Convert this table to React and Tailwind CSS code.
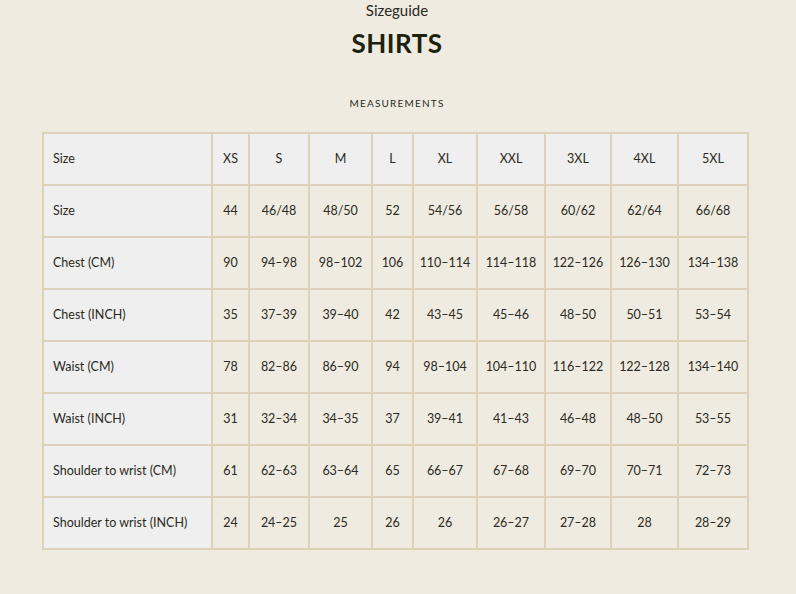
import React from "react";

const sizes = ["XS", "S", "M", "L", "XL", "XXL", "3XL", "4XL", "5XL"];
const widths = ["w-[169px]", "w-[37px]", "w-[60px]", "w-[63px]", "w-[41px]", "w-[64px]", "w-[68px]", "w-[66px]", "w-[67px]", "w-[70px]"];

const rows = [
  ["Size", "44", "46/48", "48/50", "52", "54/56", "56/58", "60/62", "62/64", "66/68"],
  ["Chest (CM)", "90", "94–98", "98–102", "106", "110–114", "114–118", "122–126", "126–130", "134–138"],
  ["Chest (INCH)", "35", "37–39", "39–40", "42", "43–45", "45–46", "48–50", "50–51", "53–54"],
  ["Waist (CM)", "78", "82–86", "86–90", "94", "98–104", "104–110", "116–122", "122–128", "134–140"],
  ["Waist (INCH)", "31", "32–34", "34–35", "37", "39–41", "41–43", "46–48", "48–50", "53–55"],
  ["Shoulder to wrist (CM)", "61", "62–63", "63–64", "65", "66–67", "67–68", "69–70", "70–71", "72–73"],
  ["Shoulder to wrist (INCH)", "24", "24–25", "25", "26", "26", "26–27", "27–28", "28", "28–29"],
];

export default function App() {
  return (
    <div className="min-h-[594px] bg-[#f0ebe1] text-[#2a2a22] font-['Lato','Noto_Sans',sans-serif]">
      <div className="flex flex-col items-center pr-[2px]">
        <p className="mt-[1px] text-[15px] leading-[18px] text-[#2a2a22]">Sizeguide</p>
        <h1 className="mt-[9px] text-[26px] leading-[30px] font-bold tracking-[0.5px] text-[#1d2210]">SHIRTS</h1>
        <p className="mt-[39px] text-[10px] leading-[12px] tracking-[1.2px] text-[#2a2a22]">MEASUREMENTS</p>
      </div>
      <div className="flex mt-[23px] pl-[42px]">
        <table className="table-fixed border-collapse w-[705px] text-[12.5px]">
          <colgroup>
            {widths.map((w, i) => (
              <col key={i} className={w} />
            ))}
          </colgroup>
          <thead>
            <tr className="h-[52px] bg-[#efefef]">
              <th className="border-2 border-[#ddd1b9] text-left font-normal pl-[9px]">Size</th>
              {sizes.map((s) => (
                <th key={s} className="border-2 border-[#ddd1b9] font-normal text-center">
                  {s}
                </th>
              ))}
            </tr>
          </thead>
          <tbody>
            {rows.map((r) => (
              <tr key={r[0]} className="h-[52px]">
                <td className="border-2 border-[#ddd1b9] bg-[#efefef] pl-[9px] whitespace-nowrap">{r[0]}</td>
                {r.slice(1).map((v, i) => (
                  <td key={i} className="border-2 border-[#ddd1b9] text-center whitespace-nowrap">
                    {v}
                  </td>
                ))}
              </tr>
            ))}
          </tbody>
        </table>
      </div>
    </div>
  );
}
